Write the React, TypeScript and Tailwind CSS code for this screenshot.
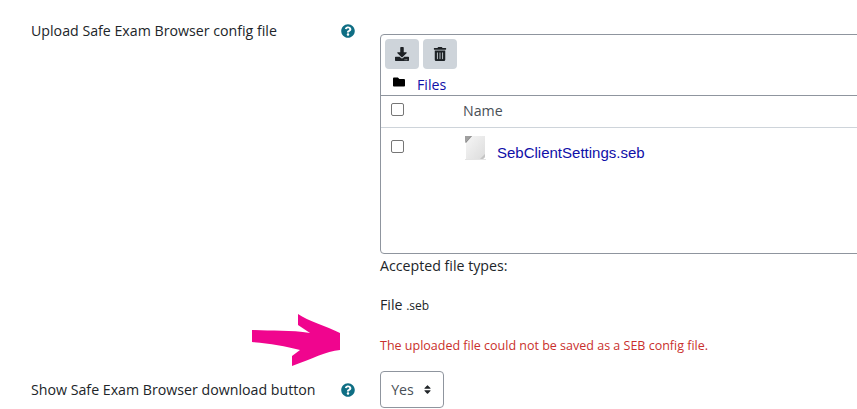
import React from 'react';
import { FaDownload, FaFolder, FaQuestionCircle, FaSort, FaTrashAlt } from 'react-icons/fa';

const labelFont = "font-['Open_Sans','Noto_Sans',sans-serif]";

const HelpIcon = () => <FaQuestionCircle className="text-[#0f6e84]" size={14} />;

const Checkbox = () => (
  <span className="block h-[13px] w-[13px] rounded-[2px] border border-[#767676] bg-white" />
);

const FileIcon = () => (
  <svg width="24" height="26" viewBox="0 0 24 26">
    <defs>
      <linearGradient id="page" x1="0" y1="0" x2="1" y2="1">
        <stop offset="0" stopColor="#f6f6f6" />
        <stop offset="1" stopColor="#dcdcdc" />
      </linearGradient>
    </defs>
    <path d="M8 1H21V22L19 24H2V7Z" fill="url(#page)" />
    <path d="M8 1H1V7Z" fill="#a0a0a0" />
    <path d="M1 7L7 1H8L2 8Z" fill="#8c8c8c" />
    <path d="M16 24L21 19V22L19 24Z" fill="#c4c4c4" />
    <path d="M1 24.5H22" stroke="#e4e4e4" strokeWidth="1" />
  </svg>
);

const PinkArrow = () => (
  <svg className="absolute left-[250px] top-[313px]" width="92" height="54" viewBox="0 0 92 54">
    <path
      d="M2 17C20 18 40 17 60 20L48 12L48 1C58 8 76 13 90 20L90 37C76 38 62 46 42 53L42 43L50 37C36 33 18 30 2 29Z"
      fill="#f0058e"
    />
  </svg>
);

export default function App() {
  return (
    <div className={`relative h-[409px] w-[857px] overflow-hidden bg-white text-[14.2px] text-[#212529] ${labelFont}`}>
      <PinkArrow />

      {/* config file row */}
      <div className="flex pt-[21px]">
        <div className="flex w-[380px] shrink-0 pl-[31px]">
          <span className="w-[310px] leading-[20px]">Upload Safe Exam Browser config file</span>
          <span className="pt-[3px]"><HelpIcon /></span>
        </div>

        <div className="mt-[13px] shrink-0">
          <div className="h-[220px] w-[500px] rounded-[4px] border border-[#8f959e]">
            <div className="flex gap-[4px] pl-[4px] pt-[4px]">
              <button className="flex h-[30px] w-[34px] items-center justify-center rounded-[4px] bg-[#ced4da] text-[#1d2125]">
                <FaDownload size={14} />
              </button>
              <button className="flex h-[30px] w-[34px] items-center justify-center rounded-[4px] bg-[#ced4da] text-[#1d2125]">
                <FaTrashAlt size={14} />
              </button>
            </div>
            <div className="flex h-[27px] items-center border-b border-[#8f959e] pl-[12px]">
              <FaFolder className="mb-[1px] text-black" size={12} />
              <span className="ml-[12px] mt-[5px] text-[#0f0fa8]">Files</span>
            </div>
            <div className="flex h-[32px] items-center border-b border-[#ced4da] pl-[10px]">
              <span className="mb-[5px]"><Checkbox /></span>
              <span className="mb-[2px] ml-[59px] text-[#495057]">Name</span>
            </div>
            <div className="flex items-start pl-[10px] pt-[7px]">
              <span className="mt-[5px]"><Checkbox /></span>
              <span className="ml-[60px]"><FileIcon /></span>
              <span className="ml-[9px] mt-[9px] font-['Liberation_Sans',sans-serif] text-[15px] leading-[18px] text-[#0f0fa8]">
                SebClientSettings.seb
              </span>
            </div>
          </div>

          <div className="mt-[2px] leading-[20px]">Accepted file types:</div>
          <div className="mt-[19px] leading-[20px]">
            File <span className="text-[12px]">.seb</span>
          </div>
          <div className="mt-[21px] text-[12.5px] leading-[18px] text-[#c9302c]">
            The uploaded file could not be saved as a SEB config file.
          </div>
        </div>
      </div>

      {/* download button row */}
      <div className="mt-[16px] flex">
        <div className="flex w-[380px] shrink-0 items-center pl-[31px]">
          <span className="w-[310px] leading-[20px]">Show Safe Exam Browser download button</span>
          <HelpIcon />
        </div>
        <div className="flex h-[37px] w-[64px] items-center justify-center gap-[8px] rounded-[4px] border border-[#8f959e] text-[#495057]">
          Yes
          <FaSort className="text-[#212529]" size={11} />
        </div>
      </div>
    </div>
  );
}
